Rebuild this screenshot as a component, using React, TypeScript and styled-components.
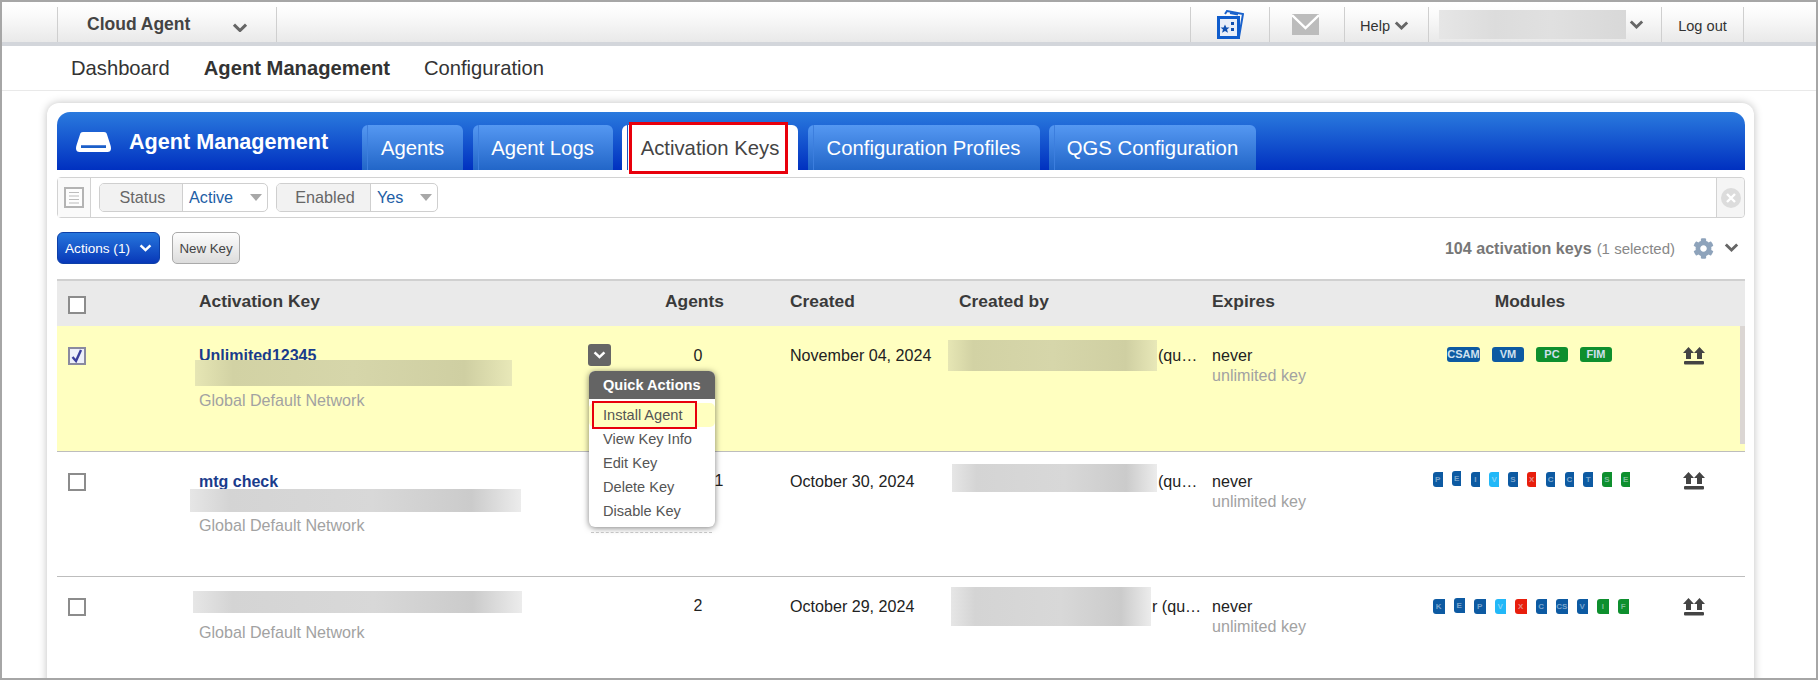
import React from "react";
import styled, { createGlobalStyle } from "styled-components";
import { FaCog } from "react-icons/fa";

const Global = createGlobalStyle`
  html, body { margin: 0; padding: 0; background: #fff; }
  body { font-family: "Liberation Sans", Arial, sans-serif; color: #222; }
  * { box-sizing: border-box; }
`;

const Frame = styled.div`
  width: 1818px; height: 680px; border: 2px solid #a6a6a6; overflow: hidden; background: #fff;
`;

/* ---------- top bar ---------- */
const TopBar = styled.header`
  height: 44px; display: flex; padding: 0 72px 0 55px;
  background: linear-gradient(#fff 0, #fbfbfb 30%, #e9e9e9 100%);
  border-bottom: 4px solid #d3d6db;
`;
const TopCell = styled.div<{ $w: number; $pr?: number; $last?: boolean }>`
  width: ${(p) => p.$w}px; margin-top: 5px; display: flex; align-items: center; justify-content: center; gap: 4px;
  padding-right: ${(p) => p.$pr ?? 0}px;
  border-left: 1px solid #cfcfcf;
  ${(p) => (p.$last ? "border-right: 1px solid #cfcfcf;" : "")}
  font-size: 14.6px; color: #333;
`;
const TextCell = styled(TopCell)`padding-top: 2px;`;
const UserCell = styled(TopCell)`justify-content: flex-start; padding-left: 10px; gap: 3px;`;
const ProductCell = styled(TopCell)`
  justify-content: flex-start; padding: 0 0 0 29px; gap: 42px;
  border-right: 1px solid #cfcfcf;
  font-size: 17.5px; font-weight: 700; color: #444;
`;
const ProductArrow = styled.span`display: flex; margin-top: 6px;`;
const Spacer = styled.div`flex: 1;`;
const UserBlur = styled.div`
  width: 187px; height: 29px; margin-top: -1px;
  background: linear-gradient(90deg, #e6e6e6, #dcdcdc 30%, #e0e0e0 60%, #d8d8d8 100%);
`;
const Chevron = ({ size = 14, color = "#666" }: { size?: number; color?: string }) => (
  <svg width={size} height={size * 0.62} viewBox="0 0 14 9" fill="none">
    <path d="M1.5 1.5 7 6.8l5.5-5.3" stroke={color} strokeWidth="2.8" />
  </svg>
);

/* ---------- nav ---------- */
const Nav = styled.nav`
  height: 45px; display: flex; align-items: center; gap: 34px; padding: 1px 0 0 69px;
  border-bottom: 1px solid #e9e9e9;
`;
const NavItem = styled.span<{ $active?: boolean }>`
  font-size: 20.2px; color: #333; font-weight: ${(p) => (p.$active ? 700 : 400)};
`;

/* ---------- card ---------- */
const Card = styled.main`
  width: 1707px; height: 620px; margin: 12px 0 0 45px; padding: 9px 9px 0 10px;
  background: #fff; border-radius: 12px; box-shadow: 0 0 9px rgba(0, 0, 0, 0.25);
`;
const Header = styled.div`
  height: 58px; display: flex; align-items: flex-end; gap: 9.5px;
  border-radius: 13px 13px 0 0;
  background: linear-gradient(#2a7ade, #0030c0);
`;
const Title = styled.div`
  width: 295.5px; align-self: flex-start; height: 44px; padding: 20px 0 0 19px;
  display: flex; align-items: flex-start; gap: 18px;
  font-size: 21.6px; font-weight: 700; color: #fff; line-height: 20px;
`;
const Tab = styled.div<{ $w: number; $active?: boolean }>`
  position: relative; width: ${(p) => p.$w}px; height: 45px; padding-top: 1px;
  display: flex; align-items: center; justify-content: center;
  border-radius: 6px 6px 0 0; font-size: 20.3px; white-space: nowrap;
  color: ${(p) => (p.$active ? "#444" : "#fff")};
  background: ${(p) => (p.$active ? "#fff" : "linear-gradient(#5598f2, #2266c8)")};
  &::before {
    content: ""; position: absolute; left: 5px; top: 0; bottom: 0; width: 1px;
    background: ${(p) => (p.$active ? "#1c55c4" : "#3c7ede")};
  }
`;
const RedTabBox = styled.div`
  position: absolute; left: 7px; top: -3px; width: 159px; height: 52px; border: 3px solid #e8000c;
  pointer-events: none;
`;

/* ---------- filter bar ---------- */
const FilterBar = styled.div`
  height: 41px; margin-top: 7px; display: flex; align-items: center;
  border: 1px solid #d2d2d2; border-radius: 4px;
`;
const DocCell = styled.div`
  width: 33px; height: 100%; flex: none; display: flex; align-items: center; justify-content: center;
  border-right: 1px solid #d2d2d2; background: #fafafa;
`;
const Pill = styled.div<{ $w: number; $label: number; $ml: number }>`
  width: ${(p) => p.$w}px; height: 29px; margin-left: ${(p) => p.$ml}px; display: grid;
  grid-template-columns: ${(p) => p.$label}px 1fr; align-items: stretch;
  border: 1px solid #cfcfcf; border-radius: 5px; overflow: hidden; font-size: 16.2px;
`;
const PillLabel = styled.div`
  background: #f2f2f2; border-right: 1px solid #cfcfcf; color: #666;
  display: flex; align-items: center; justify-content: center; padding-left: 3px;
`;
const PillValue = styled.div`
  display: flex; align-items: center; justify-content: space-between; padding: 0 5px 0 6px; color: #1d5ea6;
`;
const Triangle = styled.i`
  width: 0; height: 0; border: 6px solid transparent; border-top: 7px solid #a8a8a8; border-bottom: 0;
`;
const CloseCell = styled.div`
  margin-left: auto; width: 28px; height: 100%; display: flex; align-items: center; justify-content: center;
  background: #f5f5f5; border-left: 1px solid #d2d2d2; border-radius: 0 4px 4px 0;
`;

/* ---------- toolbar ---------- */
const Toolbar = styled.div`
  height: 32px; margin-top: 14px; display: flex; align-items: center; gap: 12px;
`;
const PrimaryButton = styled.div`
  width: 103px; height: 32px; display: flex; align-items: center; justify-content: center; gap: 9px;
  color: #fff; font-size: 13.6px; border-radius: 6px; border: 1px solid #0c3fa8;
  background: linear-gradient(#2676dc, #0838b8);
`;
const GhostButton = styled.div`
  width: 68px; height: 32px; display: flex; align-items: center; justify-content: center;
  font-size: 13.3px; color: #444; border: 1.5px solid #aaa; border-radius: 5px;
  background: linear-gradient(#fdfdfd, #dcdcdc);
`;
const Meta = styled.div`
  margin-left: auto; padding-right: 6px; display: flex; align-items: center; font-size: 15px; color: #888;
`;
const MetaCount = styled.b`font-size: 16.1px; color: #777; margin-right: 5px;`;
const GearWrap = styled.span`display: flex; margin: 0 10px 0 18px; color: #8ea3bb;`;

/* ---------- table ---------- */
const columns = "142px 409px 182px 158px 264px 208px 230px 95px";
const TableHead = styled.div`
  height: 47px; margin-top: 15px; display: grid; grid-template-columns: ${columns}; align-items: start;
  background: #eaeaea; border-top: 2px solid #d0d0d0;
  font-size: 17.4px; font-weight: 700; color: #3a3a3a;
`;
const HeadCell = styled.div<{ $center?: boolean; $pr?: number; $left?: number }>`
  padding-top: 10px; line-height: 20px;
  padding-left: ${(p) => p.$left ?? 0}px;
  padding-right: ${(p) => p.$pr ?? 0}px;
  ${(p) => (p.$center ? "text-align: center;" : "")}
`;
const CheckCell = styled.div<{ $top: number }>`
  padding: ${(p) => p.$top}px 0 0 11px;
`;
const Box = styled.div<{ $checked?: boolean }>`
  width: 18px; height: 18px; display: flex; align-items: center; justify-content: center;
  border: 2px solid ${(p) => (p.$checked ? "#8a8aa0" : "#8c8c8c")};
  background: ${(p) => (p.$checked ? "#eef0fa" : "#fff")};
`;
const Row = styled.div<{ $h: number; $selected?: boolean; $last?: boolean }>`
  position: relative; height: ${(p) => p.$h}px; display: grid; grid-template-columns: ${columns};
  align-items: start; font-size: 16.1px; line-height: 20px;
  background: ${(p) => (p.$selected ? "#ffffc0" : "#fff")};
  ${(p) => (p.$last ? "" : "border-bottom: 1px solid #bdbdbd;")}
`;
const RowScroll = styled.div`
  position: absolute; right: 0; top: 0; width: 5px; height: 118px; background: #dbd6d3;
`;
const Cell = styled.div<{ $top: number }>`
  padding-top: ${(p) => p.$top}px;
`;
const KeyCell = styled(Cell)`position: relative;`;
const KeyName = styled.div`font-size: 16px; font-weight: 700; color: #1a3c8c;`;
const Blur = styled.div<{ $w: number; $h: number; $ml?: number; $mt?: number; $tone?: string }>`
  position: relative; width: ${(p) => p.$w}px; height: ${(p) => p.$h}px; flex: none;
  margin-left: ${(p) => p.$ml ?? 0}px; margin-top: ${(p) => p.$mt ?? 0}px;
  background: ${(p) =>
    p.$tone === "yellow"
      ? "linear-gradient(90deg,#e6e6b4,#d2d2a4 12%,#d6d6aa 50%,#cfcfa2 85%,#e8e8b8)"
      : "linear-gradient(90deg,#e6e6e6,#d4d4d4 12%,#d8d8d8 55%,#cbcbcb 85%,#ececec)"};
`;
const Network = styled.div<{ $mt: number }>`margin-top: ${(p) => p.$mt}px; color: #a2a2a2;`;
const Muted = styled.div`color: #a2a2a2;`;
const Count = styled(Cell)<{ $shift?: number }>`
  text-align: center; padding-right: 2px; padding-left: ${(p) => p.$shift ?? 0}px; font-size: 16px;
`;
const OwnerCell = styled(Cell)`display: flex; align-items: flex-start; white-space: nowrap; gap: 1px;`;
const Modules = styled(Cell)<{ $left: number; $gap: number }>`
  display: flex; align-items: flex-start; padding-left: ${(p) => p.$left}px; gap: ${(p) => p.$gap}px;
`;
const palette: Record<string, string> = { b: "#0d5aa2", l: "#22b8f8", r: "#e81e0c", g: "#0e8f2e" };
const Badge = styled.span<{ $w: number; $c: string; $raise?: boolean }>`
  width: ${(p) => p.$w}px; height: 15px; flex: none; white-space: nowrap;
  display: flex; align-items: center; justify-content: center;
  margin-top: ${(p) => (p.$raise ? 1 : 2)}px;
  background: ${(p) => palette[p.$c]}; color: #cfe0ee; font-size: 11px; font-weight: 700; line-height: 15px;
  border-radius: 3px;
`;
const CutBadge = styled(Badge)`
  border-radius: 3px 0 0 3px; color: rgba(220, 232, 244, 0.55); font-size: 8px;
`;
const ActionCell = styled(Cell)`padding-left: 33px;`;

/* ---------- quick actions ---------- */
const RowToggle = styled.div`
  position: absolute; left: 389px; top: 18px; width: 23px; height: 22px; border-radius: 3px;
  background: #666; display: flex; align-items: center; justify-content: center;
`;
const Menu = styled.div`
  position: absolute; left: 390px; top: 45px; width: 126px; height: 156px; z-index: 2;
  background: #fff; border-radius: 6px; box-shadow: 0 1px 6px rgba(0, 0, 0, 0.5); font-size: 14.6px;
  &::after {
    content: ""; position: absolute; left: 2px; right: 3px; bottom: -6px; border-bottom: 1px dashed #c4c4c4;
  }
`;
const MenuHead = styled.div`
  height: 28px; padding-left: 14px; display: flex; align-items: center;
  background: #646464; color: #fff; font-weight: 700; border-radius: 6px 6px 0 0;
`;
const MenuItems = styled.div`padding-top: 4px; color: #555;`;
const MenuItem = styled.div<{ $hl?: boolean }>`
  position: relative; height: 24px; padding-left: 14px; line-height: 24px;
  background: ${(p) => (p.$hl ? "#ffffc0" : "transparent")};
  border-radius: ${(p) => (p.$hl ? "5px" : "0")};
`;
const RedItemBox = styled.div`
  position: absolute; left: 3px; top: -2px; width: 105px; height: 28px; border: 2px solid #e8000c;
`;

/* ---------- drawings ---------- */
const DriveIcon = () => (
  <svg width="35" height="20" viewBox="0 0 35 20">
    <path fillRule="evenodd" fill="#fff" d="M7 0h21c1.6 0 2.4.8 3 2.400l3.400 10.600c.4 1.200.6 2.200.6 3.500C35 19 33.500 20 31.500 20h-28C1.500 20 0 19 0 16.500c0-1.300.2-2.300.6-3.500L4 2.400C4.600.8 5.400 0 7 0zM5 13.500v2.500h25v-2.500z" />
    <rect x="5" y="13.500" width="25" height="2.500" fill="#1b5fc8" />
  </svg>
);
const CardsIcon = () => (
  <svg width="27" height="29" viewBox="0 0 27 29">
    <path d="M8 4 10 1l16 3-4 23" fill="none" stroke="#1a62cc" strokeWidth="2" />
    <path d="M13 3 21 4.500" stroke="#1a62cc" strokeWidth="2" />
    <rect x="1.500" y="7.500" width="20" height="20" fill="#e8eef8" stroke="#0f5ccc" strokeWidth="3" />
    <path d="m8 14.500 1.400 3h3.100l-2.500 2 1 3.200L8 20.900l-3 1.800 1-3.200-2.500-2h3.100z" fill="#0f4fb0" />
    <rect x="14" y="12" width="3" height="3" fill="#0f4fb0" />
    <rect x="14" y="18" width="3" height="3" fill="#0f4fb0" />
  </svg>
);
const MailIcon = () => (
  <svg width="27" height="21" viewBox="0 0 27 21">
    <rect width="27" height="21" fill="#bcbcbc" />
    <path d="M0 1 13.500 14 27 1" fill="none" stroke="#fff" strokeWidth="2.400" />
  </svg>
);
const DocIcon = () => (
  <svg width="20" height="21" viewBox="0 0 20 21">
    <rect x="1" y="1" width="18" height="19" fill="#fdfdfd" stroke="#b4b4b4" strokeWidth="2" />
    <path d="M5 5.500h10M5 9h10M5 12.500h10M5 16h10" stroke="#bcbcbc" strokeWidth="1.200" />
  </svg>
);
const CloseIcon = () => (
  <svg width="20" height="20" viewBox="0 0 20 20">
    <circle cx="10" cy="10" r="10" fill="#dcdcdc" />
    <path d="m6 6 8 8M14 6l-8 8" stroke="#fff" strokeWidth="2.400" />
  </svg>
);
const TickIcon = () => (
  <svg width="14" height="14" viewBox="0 0 14 14">
    <path d="M2.500 8 6 12 11 1" fill="none" stroke="#3b3f9c" strokeWidth="2.400" />
  </svg>
);
const UpIcon = () => (
  <svg width="22" height="18" viewBox="0 0 22 18">
    <path d="M5.500 0 11 6H8v6H3V6H0zM16.500 0 22 6h-3v6h-5V6h-3z" fill="#444" />
    <rect x="1" y="14" width="20" height="3.600" rx="1" fill="#444" />
  </svg>
);

const Tick = ({ checked }: { checked?: boolean }) => <Box $checked={checked}>{checked && <TickIcon />}</Box>;

type B = [string, string];
const row2: B[] = [["P", "b"], ["E", "b"], ["I", "b"], ["V", "l"], ["S", "b"], ["X", "r"], ["C", "b"], ["C", "b"], ["T", "b"], ["S", "g"], ["E", "g"]];
const row3: B[] = [["K", "b"], ["E", "b"], ["P", "b"], ["V", "l"], ["X", "r"], ["C", "b"], ["CS", "b"], ["V", "b"], ["I", "g"], ["F", "g"]];

export default function App() {
  return (
    <Frame>
      <Global />
      <TopBar>
        <ProductCell $w={220}>
          Cloud Agent
          <ProductArrow><Chevron size={16} /></ProductArrow>
        </ProductCell>
        <Spacer />
        <TopCell $w={79}><CardsIcon /></TopCell>
        <TopCell $w={75} $pr={3}><MailIcon /></TopCell>
        <TextCell $w={84} $pr={4}>Help <Chevron size={15} /></TextCell>
        <UserCell $w={233}><UserBlur /><Chevron size={15} /></UserCell>
        <TextCell $w={83} $last>Log out</TextCell>
      </TopBar>
      <Nav>
        <NavItem>Dashboard</NavItem>
        <NavItem $active>Agent Management</NavItem>
        <NavItem>Configuration</NavItem>
      </Nav>
      <Card>
        <Header>
          <Title><DriveIcon />Agent Management</Title>
          <Tab $w={101}>Agents</Tab>
          <Tab $w={140}>Agent Logs</Tab>
          <Tab $w={176} $active>
            Activation Keys
            <RedTabBox />
          </Tab>
          <Tab $w={232}>Configuration Profiles</Tab>
          <Tab $w={207}>QGS Configuration</Tab>
        </Header>
        <FilterBar>
          <DocCell><DocIcon /></DocCell>
          <Pill $w={169} $label={83} $ml={8}>
            <PillLabel>Status</PillLabel>
            <PillValue>Active<Triangle /></PillValue>
          </Pill>
          <Pill $w={162} $label={94} $ml={8}>
            <PillLabel>Enabled</PillLabel>
            <PillValue>Yes<Triangle /></PillValue>
          </Pill>
          <CloseCell><CloseIcon /></CloseCell>
        </FilterBar>
        <Toolbar>
          <PrimaryButton>Actions (1) <Chevron size={13} color="#fff" /></PrimaryButton>
          <GhostButton>New Key</GhostButton>
          <Meta>
            <MetaCount>104 activation keys</MetaCount> (1 selected)
            <GearWrap><FaCog size={21} /></GearWrap>
            <Chevron size={15} />
          </Meta>
        </Toolbar>
        <TableHead>
          <CheckCell $top={15}><Tick /></CheckCell>
          <HeadCell>Activation Key</HeadCell>
          <HeadCell $center $pr={9}>Agents</HeadCell>
          <HeadCell>Created</HeadCell>
          <HeadCell $left={11}>Created by</HeadCell>
          <HeadCell>Expires</HeadCell>
          <HeadCell $center $pr={10}>Modules</HeadCell>
          <HeadCell />
        </TableHead>
        <Row $h={126} $selected>
          <CheckCell $top={21}><Tick checked /></CheckCell>
          <KeyCell $top={20}>
            <KeyName>Unlimited12345</KeyName>
            <Blur $w={317} $h={26} $ml={-4} $mt={-6} $tone="yellow" />
            <Network $mt={4}>Global Default Network</Network>
            <RowToggle><Chevron size={13} color="#fff" /></RowToggle>
            <Menu>
              <MenuHead>Quick Actions</MenuHead>
              <MenuItems>
                <MenuItem $hl>Install Agent<RedItemBox /></MenuItem>
                <MenuItem>View Key Info</MenuItem>
                <MenuItem>Edit Key</MenuItem>
                <MenuItem>Delete Key</MenuItem>
                <MenuItem>Disable Key</MenuItem>
              </MenuItems>
            </Menu>
          </KeyCell>
          <Count $top={20}>0</Count>
          <Cell $top={19}>November 04, 2024</Cell>
          <OwnerCell $top={19}>
            <Blur $w={209} $h={31} $mt={-5} $tone="yellow" />(qu…
          </OwnerCell>
          <Cell $top={19}>never<Muted>unlimited key</Muted></Cell>
          <Modules $top={19} $left={27} $gap={12}>
            <Badge $w={33} $c="b">CSAM</Badge>
            <Badge $w={32} $c="b">VM</Badge>
            <Badge $w={32} $c="g">PC</Badge>
            <Badge $w={32} $c="g">FIM</Badge>
          </Modules>
          <ActionCell $top={21}><UpIcon /></ActionCell>
          <RowScroll />
        </Row>
        <Row $h={125}>
          <CheckCell $top={21}><Tick /></CheckCell>
          <KeyCell $top={20}>
            <KeyName>mtg check</KeyName>
            <Blur $w={331} $h={23} $ml={-9} $mt={-3} />
            <Network $mt={3}>Global Default Network</Network>
          </KeyCell>
          <Count $top={19} $shift={42}>1</Count>
          <Cell $top={19}>October 30, 2024</Cell>
          <OwnerCell $top={19}>
            <Blur $w={205} $h={28} $ml={4} $mt={-7} />(qu…
          </OwnerCell>
          <Cell $top={19}>never<Muted>unlimited key</Muted></Cell>
          <Modules $top={18} $left={13} $gap={9.3}>
            {row2.map(([t, c], i) => (
              <CutBadge key={i} $w={9.5} $c={c} $raise={i === 1}>{t}</CutBadge>
            ))}
          </Modules>
          <ActionCell $top={20}><UpIcon /></ActionCell>
        </Row>
        <Row $h={120} $last>
          <CheckCell $top={21}><Tick /></CheckCell>
          <KeyCell $top={14}>
            <Blur $w={329} $h={22} $ml={-6} />
            <Network $mt={9}>Global Default Network</Network>
          </KeyCell>
          <Count $top={19}>2</Count>
          <Cell $top={19}>October 29, 2024</Cell>
          <OwnerCell $top={19}>
            <Blur $w={200} $h={39} $ml={3} $mt={-9} />r (qu…
          </OwnerCell>
          <Cell $top={19}>never<Muted>unlimited key</Muted></Cell>
          <Modules $top={20} $left={13} $gap={9}>
            {row3.map(([t, c], i) => (
              <CutBadge key={i} $w={11.5} $c={c} $raise={i === 1}>{t}</CutBadge>
            ))}
          </Modules>
          <ActionCell $top={21}><UpIcon /></ActionCell>
        </Row>
      </Card>
    </Frame>
  );
}
